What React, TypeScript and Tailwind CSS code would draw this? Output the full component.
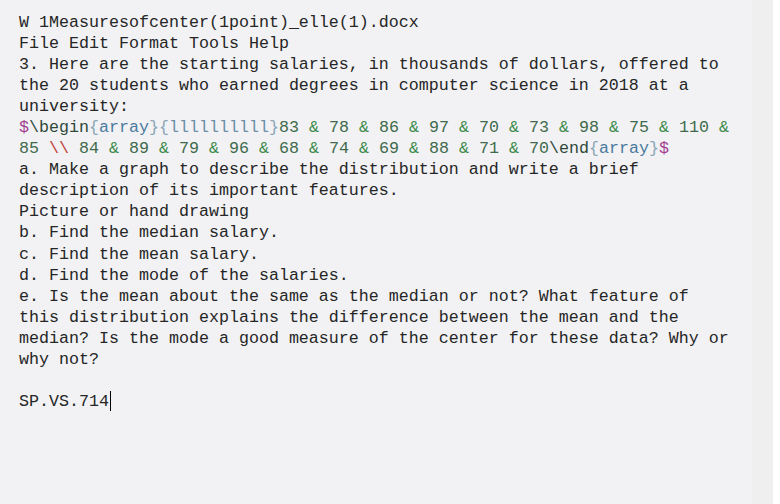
const lines: React.ReactNode[] = [
  "W 1Measuresofcenter(1point)_elle(1).docx",
  "File Edit Format Tools Help",
  "3. Here are the starting salaries, in thousands of dollars, offered to",
  "the 20 students who earned degrees in computer science in 2018 at a",
  "university:",
];

function Num({ v }: { v: string }) {
  return <span className="text-[#3f6b4c]">{v}</span>;
}

function Amp() {
  return <span className="text-[#3d8a4a]">&amp;</span>;
}

function Row({ nums, trailing }: { nums: string[]; trailing?: boolean }) {
  return (
    <>
      {nums.map((n, i) => (
        <span key={i}>
          <Num v={n} />
          {i < nums.length - 1 || trailing ? (
            <>
              {" "}
              <Amp />{" "}
            </>
          ) : null}
        </span>
      ))}
    </>
  );
}

const after = [
  "a. Make a graph to describe the distribution and write a brief",
  "description of its important features.",
  "Picture or hand drawing",
  "b. Find the median salary.",
  "c. Find the mean salary.",
  "d. Find the mode of the salaries.",
  "e. Is the mean about the same as the median or not? What feature of",
  "this distribution explains the difference between the mean and the",
  "median? Is the mode a good measure of the center for these data? Why or",
  "why not?",
];

export default function App() {
  return (
    <div className="flex h-[504px] w-[780px] bg-white">
      <div className="flex flex-1 bg-[#f2f2f4]">
        <div className="flex-1 pl-[19px] pt-[12px] font-['Liberation_Mono',monospace] text-[16.67px] leading-[21.05px] text-[#262626] whitespace-pre">
          {lines.map((l, i) => (
            <div key={i}>{l}</div>
          ))}
          <div>
            <span className="text-[#a03d8f]">$</span>
            <span className="text-[#2f4a3a]">\begin</span>
            <span className="text-[#8aa6b8]">{"{"}</span>
            <span className="text-[#4a7a9e]">array</span>
            <span className="text-[#8aa6b8]">{"}{"}</span>
            <span className="text-[#6a8fa6]">llllllllll</span>
            <span className="text-[#8aa6b8]">{"}"}</span>
            <Row nums={["83", "78", "86", "97", "70", "73", "98", "75", "110"]} trailing />
          </div>
          <div>
            <Num v="85" /> <span className="text-[#c2403a]">\\</span>{" "}
            <Row nums={["84", "89", "79", "96", "68", "74", "69", "88", "71", "70"]} />
            <span className="text-[#2f4a3a]">\end</span>
            <span className="text-[#8aa6b8]">{"{"}</span>
            <span className="text-[#4a7a9e]">array</span>
            <span className="text-[#8aa6b8]">{"}"}</span>
            <span className="text-[#a03d8f]">$</span>
          </div>
          {after.map((l, i) => (
            <div key={i}>{l}</div>
          ))}
          <div>&nbsp;</div>
          <div className="flex items-center">
            <span>SP.VS.714</span>
            <span className="ml-px inline-block h-[20px] w-px bg-black" />
          </div>
        </div>
        <div className="w-[21px] bg-[#efeff0]" />
      </div>
      <div className="w-[7px] bg-white" />
    </div>
  );
}
